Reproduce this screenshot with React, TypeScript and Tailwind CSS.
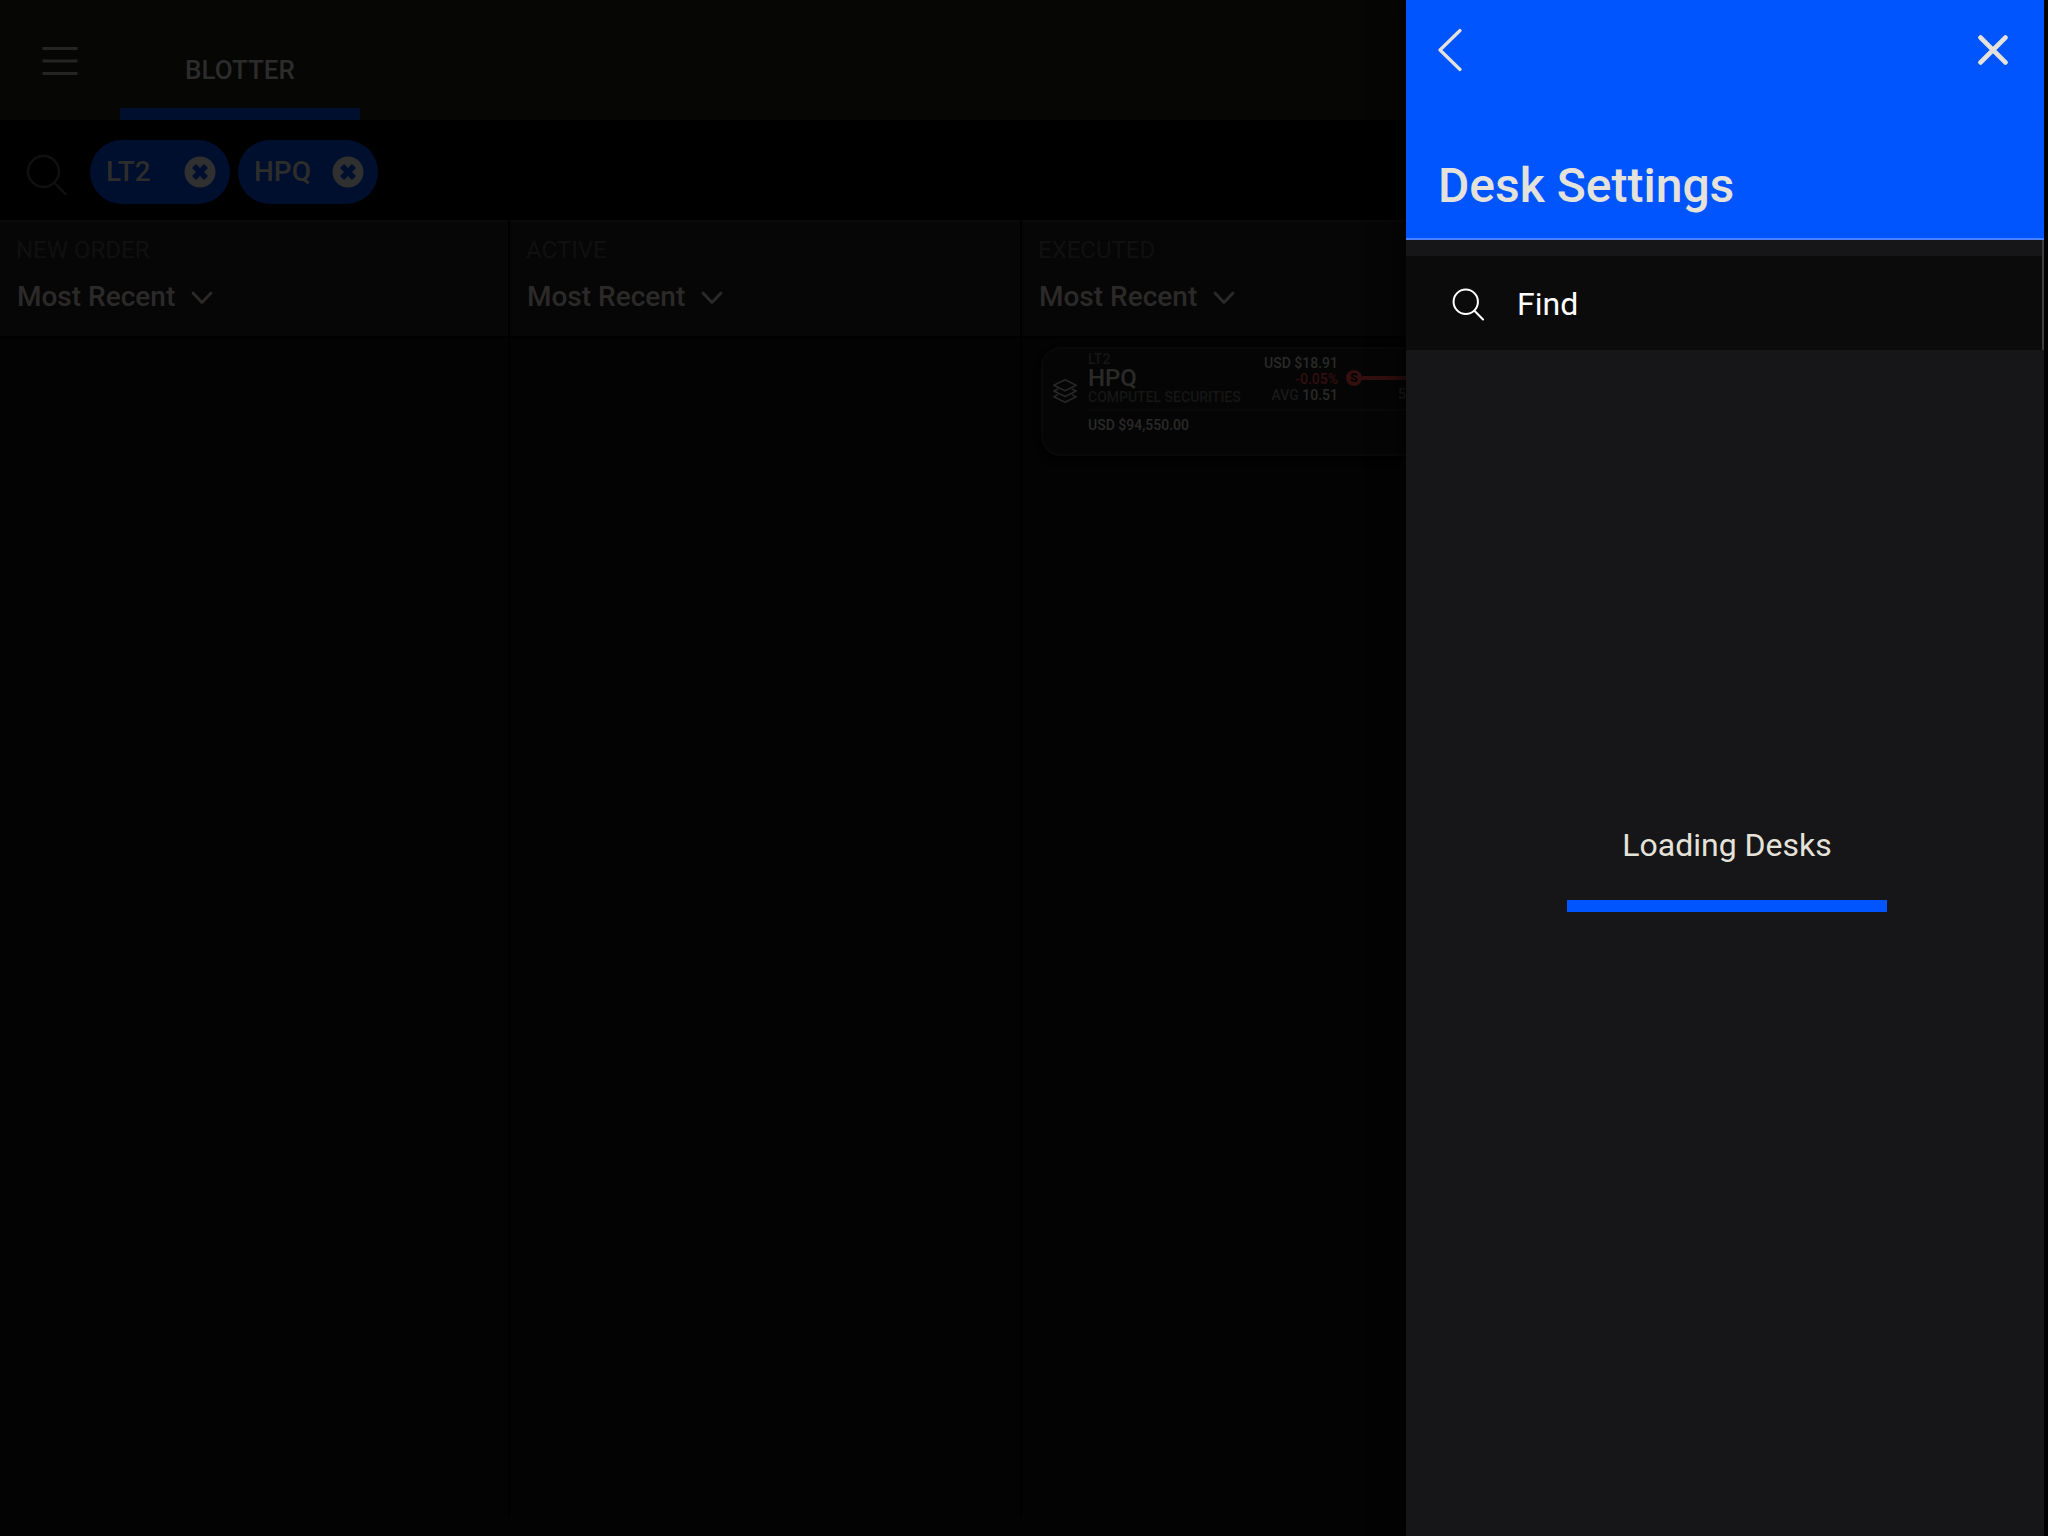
import React from "react";

function SearchIcon({ className }: { className: string }) {
  return (
    <svg viewBox="0 0 42 42" fill="none" stroke="currentColor" strokeLinecap="round" className={className} aria-hidden="true">
      <circle cx="17.5" cy="17.5" r="15.5" />
      <path d="M28.5 29 L39.5 40" />
    </svg>
  );
}

function Chip({ label }: { label: string }) {
  return (
    <li className="flex h-16 w-[140px] items-center justify-between rounded-full bg-[#000f2e] pl-4 pr-[14px]">
      <span className="text-[28px] leading-8 font-medium text-[#2d2d2b]">{label}</span>
      <button type="button" aria-label={`Remove ${label}`}>
        <svg viewBox="0 0 32 32" className="size-8" aria-hidden="true">
          <circle cx="16" cy="16" r="15.5" fill="#303030" />
          <path d="M10 10 L22 22 M22 10 L10 22" stroke="#000f2e" strokeWidth="5.8" />
        </svg>
      </button>
    </li>
  );
}

function ColumnHeader({ title }: { title: string }) {
  const id = `sort-${title.toLowerCase().replace(" ", "-")}`;
  return (
    <header className="h-[118px] border-t-2 border-b-2 border-t-[#0a0a0a] border-b-black bg-[#060606] px-4 pt-3">
      <h2 className="text-[24px] leading-8 text-[#101010]">
        <label htmlFor={id}>{title}</label>
      </h2>
      <div className="mt-[13px] flex items-center gap-4 pl-px">
        <select id={id} className="appearance-none bg-transparent text-[28px] leading-9 font-medium text-[#2b2a29]">
          <option>Most Recent</option>
        </select>
        <svg viewBox="0 0 22 14" fill="none" stroke="#2b2a29" strokeWidth="2.8" strokeLinecap="round" strokeLinejoin="round" className="mt-[2px] -ml-px h-[14px] w-[22px]" aria-hidden="true">
          <path d="M2 2 L11 11.5 L20 2" />
        </svg>
      </div>
    </header>
  );
}

function OrderCard() {
  return (
    <article className="flex h-[109px] rounded-[20px] border-2 border-[#090909] bg-[#050505] pl-[10px] text-[14px] leading-4 font-medium shadow-[0_4px_6px_#000]">
      <svg viewBox="0 0 24 24" fill="none" stroke="#272727" strokeWidth="1.6" strokeLinejoin="round" strokeLinecap="round" className="mt-[30px] size-6 shrink-0" aria-hidden="true">
        <path d="M12 0.8 L23.2 6.3 L12 11.8 L0.8 6.3 Z" />
        <path d="M4.6 10.2 L0.8 12 L12 17.5 L23.2 12 L19.4 10.2" />
        <path d="M4.6 15.9 L0.8 17.7 L12 23.2 L23.2 17.7 L19.4 15.9" />
      </svg>
      <div className="ml-[11px] min-w-0 grow">
        <div className="flex h-[62px] border-b-2 border-[#090909]">
          <div className="w-[168px] shrink-0 pt-[2px]">
            <p className="text-[#161616]">LT2</p>
            <p className="text-[24px] leading-[22px] text-[#2a2a29]">HPQ</p>
            <p className="text-[#161616]">COMPUTEL SECURITIES</p>
          </div>
          <div className="w-[82px] shrink-0 pt-[6px] text-right whitespace-nowrap">
            <p className="text-[#2a2a29]">USD $18.91</p>
            <p className="text-[#330f0f]">-0.05%</p>
            <p className="text-[#2a2a29]">
              <span className="text-[#191919]">AVG</span> 10.51
            </p>
          </div>
          <div className="ml-[8px] min-w-0 grow pt-[21px]">
            <div className="flex items-center">
              <span className="flex size-4 shrink-0 items-center justify-center rounded-full bg-[#330f0f] text-[12px] font-bold text-black">S</span>
              <span className="h-1 grow bg-[#330f0f]" />
            </div>
            <p className="pl-[52px] text-[#1e1e1e]">5,000</p>
          </div>
        </div>
        <p className="pt-[6px] text-[#2a2a29]">USD $94,550.00</p>
      </div>
    </article>
  );
}

function DeskSettings() {
  return (
    <aside aria-label="Desk Settings" className="absolute inset-y-0 right-1 flex w-[638px] flex-col bg-[#161618] shadow-[0_0_28px_#000]">
      <header className="flex h-60 flex-col justify-between border-b-2 border-[#4a80fb] bg-[#0055ff] px-8 pt-6 pb-6 text-[#e5e2da]">
        <div className="flex items-center justify-between">
          <button type="button" aria-label="Back">
            <svg viewBox="0 0 24 52" fill="none" stroke="currentColor" strokeWidth="3.2" strokeLinecap="round" strokeLinejoin="round" className="h-[52px] w-6" aria-hidden="true">
              <path d="M22 6.5 L2 26 L22 45.5" />
            </svg>
          </button>
          <button type="button" aria-label="Close" className="mr-1">
            <svg viewBox="0 0 30 30" fill="none" stroke="currentColor" strokeWidth="4.8" strokeLinecap="round" className="size-[30px]" aria-hidden="true">
              <path d="M2.6 2.6 L27.4 27.4 M27.4 2.6 L2.6 27.4" />
            </svg>
          </button>
        </div>
        <h2 className="text-[48px] leading-[56px] font-medium">Desk Settings</h2>
      </header>
      <div className="flex flex-col border-r-2 border-[#3c3c3e] pt-4">
        <label className="flex h-[94px] items-center gap-8 bg-[#0b0b0b] pt-[2px] pl-[46px] text-white">
          <SearchIcon className="size-[33px] shrink-0 stroke-[2.6]" />
          <input type="text" aria-label="Find desks" placeholder="Find" className="min-w-0 grow bg-transparent text-[32px] leading-10 outline-none placeholder:text-white placeholder:opacity-100" />
        </label>
      </div>
      <div className="flex grow flex-col items-center pt-[475px] pl-1">
        <p className="text-[32px] leading-10 text-[#e5e2da]">Loading Desks</p>
        <div role="progressbar" aria-label="Loading Desks" className="mt-[35px] h-3 w-80 bg-[#0055ff]" />
      </div>
    </aside>
  );
}

export default function App() {
  return (
    <div className="relative flex min-h-screen flex-col overflow-hidden bg-[#030303] font-[Roboto,sans-serif]">
      <nav className="flex h-[120px] bg-[#060604]">
        <button type="button" aria-label="Menu" className="flex w-[120px] items-center justify-center pt-[2px]">
          <svg viewBox="0 0 36 28" stroke="#242424" strokeWidth="3" className="h-7 w-9" aria-hidden="true">
            <path d="M0.5 1.5 H35.5 M0.5 14 H35.5 M0.5 26.5 H35.5" />
          </svg>
        </button>
        <button type="button" className="flex w-60 items-center justify-center border-b-[12px] border-[#000f2e] pt-8 text-[26px] leading-8 font-medium text-[#2c2c2c]">
          BLOTTER
        </button>
      </nav>
      <div className="flex h-[100px] items-center bg-black pt-1 pl-[26px]">
        <SearchIcon className="mt-[6px] size-[42px] stroke-[2.4] text-[#101010]" />
        <ul className="ml-[22px] flex gap-2">
          <Chip label="LT2" />
          <Chip label="HPQ" />
        </ul>
      </div>
      <main className="grid grow grid-cols-[510fr_512fr_512fr_514fr] pb-5">
        <section className="border-r-2 border-black">
          <ColumnHeader title="NEW ORDER" />
        </section>
        <section className="border-r-2 border-black">
          <ColumnHeader title="ACTIVE" />
        </section>
        <section className="border-r-2 border-black">
          <ColumnHeader title="EXECUTED" />
          <div className="px-[19px] pt-[9px]">
            <OrderCard />
          </div>
        </section>
      </main>
      <DeskSettings />
    </div>
  );
}
